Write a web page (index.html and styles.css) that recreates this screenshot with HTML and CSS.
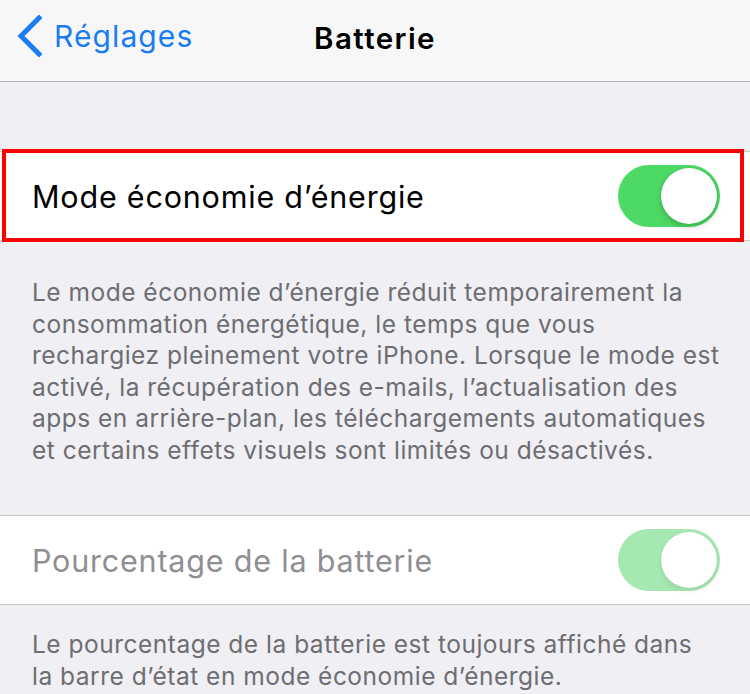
FILE: index.html
```html
<!DOCTYPE html>
<html lang="fr">
<head>
<meta charset="utf-8">
<title>Batterie</title>
<link rel="stylesheet" href="styles.css">
</head>
<body>
<div class="screen">
  <header class="navbar">
    <div class="back">
      <svg class="chevron" width="26" height="42" viewBox="0 0 26 42" aria-hidden="true">
        <polyline points="23,3 5,21 23,39" fill="none" stroke="#1a7cf5" stroke-width="5" stroke-linecap="square" stroke-linejoin="miter"/>
      </svg>
      <span class="back-label">Réglages</span>
    </div>
    <h1 class="title">Batterie</h1>
  </header>

  <section class="group group-first">
    <div class="cell highlighted">
      <span class="cell-label">Mode économie d’énergie</span>
      <span class="switch on"><span class="knob"></span></span>
      <span class="annotation"></span>
    </div>
  </section>
  <p class="footer footer-first">Le mode économie d’énergie réduit temporairement la<br>consommation énergétique, le temps que vous<br>rechargiez pleinement votre iPhone. Lorsque le mode est<br>activé, la récupération des e-mails, l’actualisation des<br>apps en arrière-plan, les téléchargements automatiques<br>et certains effets visuels sont limités ou désactivés.</p>

  <section class="group">
    <div class="cell">
      <span class="cell-label disabled">Pourcentage de la batterie</span>
      <span class="switch on dim"><span class="knob"></span></span>
    </div>
  </section>
  <p class="footer footer-second">Le pourcentage de la batterie est toujours affiché dans<br>la barre d’état en mode économie d’énergie.</p>
</div>
</body>
</html>
```

FILE: styles.css
```css
* { box-sizing: border-box; }
html, body {
  margin: 0;
  padding: 0;
  background: #efeff4;
}
body {
  font-family: Inter, "Noto Sans", "Liberation Sans", sans-serif;
  width: 750px;
  height: 694px;
  overflow: hidden;
}
.screen {
  display: flex;
  flex-direction: column;
}
.navbar {
  position: relative;
  height: 82px;
  background: #f7f7f8;
  border-bottom: 1px solid #b4b4b8;
  display: flex;
  align-items: center;
  justify-content: center;
  padding-bottom: 5px;
}
.back {
  position: absolute;
  left: 16px;
  top: 15px;
  display: flex;
  align-items: center;
  gap: 12px;
}
.chevron { display: block; }
.back-label {
  color: #1a7cf5;
  font-size: 30px;
  letter-spacing: 1.1px;
  line-height: 42px;
}
.title {
  margin: 0;
  font-size: 29.5px;
  font-weight: 600;
  color: #000;
  letter-spacing: 1.4px;
}
.group {
  background: #fff;
  border-top: 1px solid #c8c7cc;
  border-bottom: 1px solid #c8c7cc;
}
.group-first { margin-top: 69px; }
.cell {
  position: relative;
  height: 88px;
  display: flex;
  align-items: center;
  justify-content: space-between;
  padding: 0 30px 0 32px;
}
.cell-label {
  font-size: 30.5px;
  color: #000;
  letter-spacing: 0.8px;
}
.cell-label.disabled { color: #8e8e93; }
.switch {
  position: relative;
  width: 102px;
  height: 62px;
  border-radius: 31px;
  background: #4cd964;
  display: block;
}
.switch.dim { background: #a5e8b1; }
.knob {
  position: absolute;
  right: 3px;
  top: 3px;
  width: 56px;
  height: 56px;
  border-radius: 50%;
  background: #fff;
  box-shadow: 0 3px 6px rgba(0, 0, 0, 0.2), 0 0 1px rgba(0, 0, 0, 0.2);
}
.switch.dim .knob {
  box-shadow: 0 3px 6px rgba(0, 0, 0, 0.08), 0 0 1px rgba(0, 0, 0, 0.08);
}
.annotation {
  position: absolute;
  left: 2px;
  top: -3px;
  width: 742px;
  height: 93px;
  border: 4px solid #ff0000;
  pointer-events: none;
}
.footer {
  margin: 0;
  padding: 0 10px 0 32px;
  font-size: 24.5px;
  line-height: 31.5px;
  color: #6d6d72;
  white-space: nowrap;
  letter-spacing: 0.5px;
}
.footer-first {
  padding-top: 36px;
  padding-bottom: 49px;
}
.footer-second {
  padding-top: 24px;
}
```
